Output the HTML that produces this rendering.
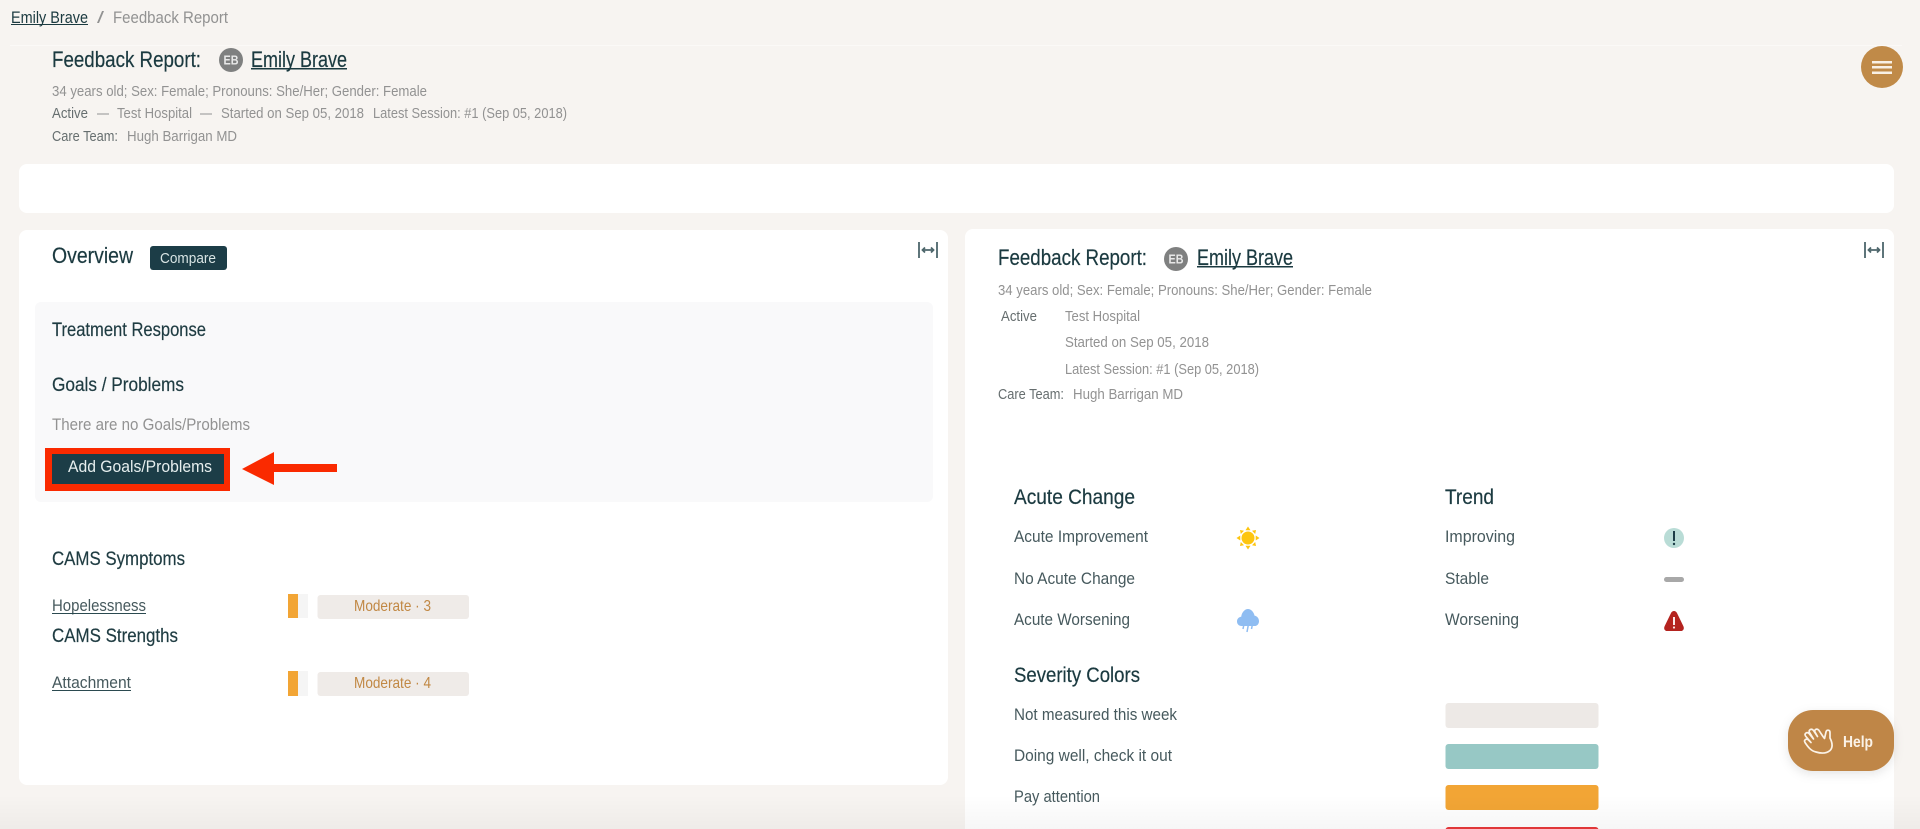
<!DOCTYPE html>
<html lang="en">
<head>
<meta charset="utf-8">
<title>Feedback Report</title>
<style>
html,body{margin:0;padding:0;width:1920px;height:829px;overflow:hidden;background:#f7f4f1}
svg{display:block;filter:blur(.35px)}
text{font-family:"Liberation Sans",sans-serif;white-space:pre}
.h{font-size:22px;fill:#1b3a40;stroke:#1b3a40;stroke-width:.2px}
.s{font-size:19px;fill:#1f3c42;stroke:#1f3c42;stroke-width:.2px}
.b{font-size:16.5px;fill:#46595d}
.g{font-size:15px;fill:#929292}
.d{font-size:15px;fill:#666e6f}
</style>
</head>
<body>
<svg width="1920" height="829" viewBox="0 0 1920 829" xmlns="http://www.w3.org/2000/svg">
<defs>
<linearGradient id="fade" x1="0" y1="0" x2="0" y2="1"><stop offset="0" stop-color="#000" stop-opacity="0"/><stop offset="1" stop-color="#000" stop-opacity=".035"/></linearGradient>
<filter id="sh" x="-20%" y="-20%" width="140%" height="150%"><feDropShadow dx="0" dy="3" stdDeviation="5" flood-color="#000" flood-opacity=".1"/></filter>
</defs>
<rect width="1920" height="829" fill="#f7f4f1"/>

<!-- breadcrumb -->
<text x="11" y="23" class="b" style="fill:#1b3a40" textLength="77" lengthAdjust="spacingAndGlyphs">Emily Brave</text>
<rect x="11" y="24" width="77" height="1" fill="#1b3a40"/>
<text x="97" y="23" class="g" style="font-size:17px" textLength="7" lengthAdjust="spacingAndGlyphs">/</text>
<text x="113" y="23" class="g" style="font-size:16.5px" textLength="115" lengthAdjust="spacingAndGlyphs">Feedback Report</text>
<rect x="10" y="45" width="1892" height="1" fill="#fbf9f7"/>

<!-- header -->
<text x="52" y="67" class="h" textLength="149" lengthAdjust="spacingAndGlyphs">Feedback Report:</text>
<circle cx="231" cy="60" r="12" fill="#7f8080"/>
<text x="231" y="64.500" text-anchor="middle" style="font-size:13px;font-weight:bold;fill:#e8e8e8" textLength="15" lengthAdjust="spacingAndGlyphs">EB</text>
<text x="251" y="67" class="h" textLength="96" lengthAdjust="spacingAndGlyphs">Emily Brave</text>
<rect x="251" y="68" width="96" height="1.500" fill="#1b3a40"/>
<text x="52" y="96" class="g" textLength="375" lengthAdjust="spacingAndGlyphs">34 years old; Sex: Female; Pronouns: She/Her; Gender: Female</text>
<text x="52" y="118" class="d" textLength="36" lengthAdjust="spacingAndGlyphs">Active</text>
<text x="97" y="118" class="g" textLength="12" lengthAdjust="spacingAndGlyphs">—</text>
<text x="117" y="118" class="g" textLength="75" lengthAdjust="spacingAndGlyphs">Test Hospital</text>
<text x="200" y="118" class="g" textLength="12" lengthAdjust="spacingAndGlyphs">—</text>
<text x="221" y="118" class="g" textLength="143" lengthAdjust="spacingAndGlyphs">Started on Sep 05, 2018</text>
<text x="373" y="118" class="g" textLength="194" lengthAdjust="spacingAndGlyphs">Latest Session: #1 (Sep 05, 2018)</text>
<text x="52" y="141" class="d" textLength="66" lengthAdjust="spacingAndGlyphs">Care Team:</text>
<text x="127" y="141" class="g" textLength="110" lengthAdjust="spacingAndGlyphs">Hugh Barrigan MD</text>

<!-- hamburger -->
<circle cx="1882" cy="67" r="21" fill="#c08a48"/>
<rect x="1872" y="61" width="20" height="2.500" fill="#f8f0e5"/>
<rect x="1872" y="66" width="20" height="2.500" fill="#f8f0e5"/>
<rect x="1872" y="71.500" width="20" height="2.500" fill="#f8f0e5"/>

<!-- white bar -->
<rect x="19" y="164" width="1875" height="49" rx="8" fill="#fff"/>

<!-- left panel -->
<rect x="19" y="230" width="929" height="555" rx="8" fill="#fff"/>
<text x="52" y="263" class="h" textLength="81" lengthAdjust="spacingAndGlyphs">Overview</text>
<rect x="150" y="246" width="77" height="24" rx="3" fill="#1c3d47"/>
<text x="160" y="263" style="font-size:15px;fill:#d8e4e4" textLength="56" lengthAdjust="spacingAndGlyphs">Compare</text>
<g fill="none" stroke="#4d666b" stroke-width="1.800">
<path d="M919 242V258M937 242V258M923 250H933"/>
<path d="M925 247.500L922.500 250L925 252.500M931 247.500L933.500 250L931 252.500"/>
</g>

<rect x="35" y="302" width="898" height="200" rx="6" fill="#f9f9fa"/>
<text x="52" y="336" class="s" textLength="154" lengthAdjust="spacingAndGlyphs">Treatment Response</text>
<text x="52" y="391" class="s" textLength="132" lengthAdjust="spacingAndGlyphs">Goals / Problems</text>
<text x="52" y="430" class="g" style="font-size:16.500px" textLength="198" lengthAdjust="spacingAndGlyphs">There are no Goals/Problems</text>
<rect x="45" y="448" width="185" height="43" fill="#fa2a00"/>
<rect x="52" y="454" width="172" height="30" fill="#1c3d47"/>
<text x="68" y="472" style="font-size:16.500px;fill:#e6eeee" textLength="144" lengthAdjust="spacingAndGlyphs">Add Goals/Problems</text>
<path d="M242 469L274 452V464H337V472H274V485Z" fill="#fa2a00"/>

<text x="52" y="565" class="s" textLength="133" lengthAdjust="spacingAndGlyphs">CAMS Symptoms</text>
<text x="52" y="611" class="b" textLength="94" lengthAdjust="spacingAndGlyphs">Hopelessness</text>
<rect x="52" y="613" width="94" height="1" fill="#2b4a50"/>
<rect x="288" y="594" width="20" height="24" fill="#f5f5f5"/>
<rect x="288" y="594" width="10" height="24" fill="#f2a535"/>
<rect x="317.500" y="595" width="151.500" height="24" rx="3" fill="#efebe8"/>
<text x="354" y="611" style="font-size:16px;fill:#c18844" textLength="77" lengthAdjust="spacingAndGlyphs">Moderate · 3</text>

<text x="52" y="642" class="s" textLength="126" lengthAdjust="spacingAndGlyphs">CAMS Strengths</text>
<text x="52" y="688" class="b" textLength="79" lengthAdjust="spacingAndGlyphs">Attachment</text>
<rect x="52" y="690" width="79" height="1" fill="#2b4a50"/>
<rect x="288" y="671" width="20" height="25" fill="#f5f5f5"/>
<rect x="288" y="671" width="10" height="25" fill="#f2a535"/>
<rect x="317.500" y="672" width="151.500" height="24" rx="3" fill="#efebe8"/>
<text x="354" y="688" style="font-size:16px;fill:#c18844" textLength="77" lengthAdjust="spacingAndGlyphs">Moderate · 4</text>

<!-- right panel -->
<rect x="965" y="229" width="929" height="620" rx="8" fill="#fff"/>
<g fill="none" stroke="#4d666b" stroke-width="1.800">
<path d="M1865 242V258M1883 242V258M1869 250H1879"/>
<path d="M1871 247.500L1868.500 250L1871 252.500M1877 247.500L1879.500 250L1877 252.500"/>
</g>
<text x="998" y="265" class="h" textLength="149" lengthAdjust="spacingAndGlyphs">Feedback Report:</text>
<circle cx="1176" cy="259" r="12" fill="#7f8080"/>
<text x="1176" y="263.500" text-anchor="middle" style="font-size:13px;font-weight:bold;fill:#e8e8e8" textLength="15" lengthAdjust="spacingAndGlyphs">EB</text>
<text x="1197" y="265" class="h" textLength="96" lengthAdjust="spacingAndGlyphs">Emily Brave</text>
<rect x="1197" y="266" width="96" height="1.500" fill="#1b3a40"/>
<text x="998" y="295" class="g" textLength="374" lengthAdjust="spacingAndGlyphs">34 years old; Sex: Female; Pronouns: She/Her; Gender: Female</text>
<text x="1001" y="321" class="d" textLength="36" lengthAdjust="spacingAndGlyphs">Active</text>
<text x="1065" y="321" class="g" textLength="75" lengthAdjust="spacingAndGlyphs">Test Hospital</text>
<text x="1065" y="347" class="g" textLength="144" lengthAdjust="spacingAndGlyphs">Started on Sep 05, 2018</text>
<text x="1065" y="374" class="g" textLength="194" lengthAdjust="spacingAndGlyphs">Latest Session: #1 (Sep 05, 2018)</text>
<text x="998" y="399" class="d" textLength="66" lengthAdjust="spacingAndGlyphs">Care Team:</text>
<text x="1073" y="399" class="g" textLength="110" lengthAdjust="spacingAndGlyphs">Hugh Barrigan MD</text>

<text x="1014" y="504" class="h" style="font-size:21px" textLength="121" lengthAdjust="spacingAndGlyphs">Acute Change</text>
<text x="1445" y="504" class="h" style="font-size:21px" textLength="49" lengthAdjust="spacingAndGlyphs">Trend</text>
<text x="1014" y="542" class="b" textLength="134" lengthAdjust="spacingAndGlyphs">Acute Improvement</text>
<text x="1445" y="542" class="b" textLength="70" lengthAdjust="spacingAndGlyphs">Improving</text>
<text x="1014" y="584" class="b" textLength="121" lengthAdjust="spacingAndGlyphs">No Acute Change</text>
<text x="1445" y="584" class="b" textLength="44" lengthAdjust="spacingAndGlyphs">Stable</text>
<text x="1014" y="625" class="b" textLength="116" lengthAdjust="spacingAndGlyphs">Acute Worsening</text>
<text x="1445" y="625" class="b" textLength="74" lengthAdjust="spacingAndGlyphs">Worsening</text>

<!-- sun -->
<g fill="#fdc50f">
<circle cx="1248" cy="538" r="6.500"/>
<path d="M1248 526.500l2.500 3.800h-5zM1248 549.500l2.500-3.800h-5zM1236.500 538l3.800-2.500v5zM1259.500 538l-3.800-2.500v5z"/>
<path d="M1240 530l4 .8-3.200 3.200zM1256 530l-4 .8 3.200 3.200zM1240 546l4-.8-3.200-3.200zM1256 546l-4-.8 3.200-3.200z"/>
</g>
<!-- rain -->
<path d="M1241.500 626c-2.700 0-4.500-2-4.500-4.600 0-2.600 1.800-4.500 4.200-4.700 .7-4.600 3.700-7.700 6.800-7.700 3 0 5.600 2.700 6.600 6.700 2.700 .2 4.400 2.800 4.400 5.500 0 2.800-1.900 4.800-4.500 4.800z" fill="#8fbdf2"/>
<path d="M1244 624l-1 5M1248.500 624l-1.500 8M1252.500 624l-1 5" stroke="#8fbdf2" stroke-width="1.500" fill="none"/>
<!-- trend icons -->
<circle cx="1674" cy="538" r="10" fill="#b9dcd6"/>
<rect x="1673" y="531" width="2" height="10" fill="#1c3d47"/>
<circle cx="1674" cy="544" r="1.200" fill="#1c3d47"/>
<rect x="1664" y="577" width="20" height="5" rx="2.500" fill="#a8a8a8"/>
<path d="M1674 611c1.400 0 2.400 .8 3.100 2.200l6.300 13c1.100 2.400 0 4.800-2.600 4.800h-13.600c-2.600 0-3.700-2.400-2.600-4.800l6.300-13c.7-1.400 1.700-2.200 3.100-2.200z" fill="#b4231f"/>
<rect x="1673" y="617" width="2" height="8" fill="#fbeaea"/>
<circle cx="1674" cy="627.500" r="1.100" fill="#fbeaea"/>

<text x="1014" y="682" class="h" style="font-size:21px" textLength="126" lengthAdjust="spacingAndGlyphs">Severity Colors</text>
<text x="1014" y="720" class="b" textLength="163" lengthAdjust="spacingAndGlyphs">Not measured this week</text>
<text x="1014" y="761" class="b" textLength="158" lengthAdjust="spacingAndGlyphs">Doing well, check it out</text>
<text x="1014" y="802" class="b" textLength="86" lengthAdjust="spacingAndGlyphs">Pay attention</text>
<rect x="1445.500" y="703" width="153" height="25" rx="3" fill="#ede9e6"/>
<rect x="1445.500" y="744" width="153" height="25" rx="3" fill="#97c8c5"/>
<rect x="1445.500" y="785" width="153" height="25" rx="3" fill="#f2a535"/>
<rect x="1445.500" y="827" width="153" height="25" rx="3" fill="#e8383a"/>

<!-- bottom fade -->
<rect x="0" y="795" width="1920" height="34" fill="url(#fade)"/>

<!-- help -->
<rect x="1788" y="710" width="106" height="61" rx="25" fill="#bf8647" filter="url(#sh)"/>
<g transform="translate(1803 727)" fill="none" stroke="#fbf3e8" stroke-width="1.700" stroke-linecap="round" stroke-linejoin="round">
<path d="M13 25C8 24 5 20 2 15.500C.5 13 3.500 11 5.500 13L8 15.500L2.500 9C1 6.500 4 4.500 6 6.500L10.500 12L6.500 5.500C5 3 8.500 1 10.500 3.500L14.500 9.500L12 5C10.800 2.500 14 1 15.800 3.200L20 9.500L21.500 11.500L23 5C23.500 2.500 27 2.500 27 5.500L27 11C29.500 16 30 20.500 27 23.500C23.500 26.500 18 26.500 13 25Z"/>
</g>
<text x="1843" y="747" style="font-size:15.500px;font-weight:bold;fill:#fbf3e8" textLength="30" lengthAdjust="spacingAndGlyphs">Help</text>
</svg>
</body>
</html>
